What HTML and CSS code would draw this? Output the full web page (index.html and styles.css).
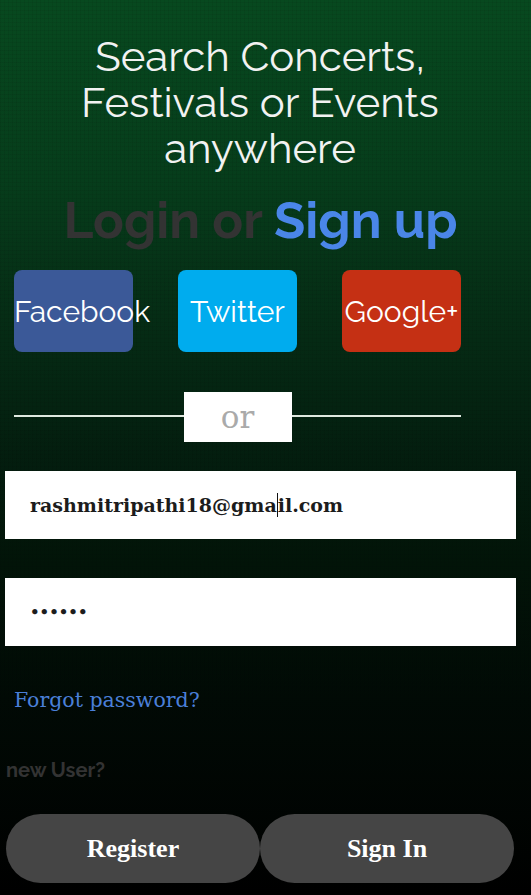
FILE: index.html
```html
<!DOCTYPE html>
<html lang="en">
<head>
<meta charset="utf-8">
<title>Login</title>
<link rel="stylesheet" href="styles.css">
</head>
<body>
<main class="page">
  <h1 class="headline">Search Concerts,<br>Festivals or Events<br>anywhere</h1>
  <h2 class="title"><span class="title-login">Login or</span> <span class="title-signup">Sign up</span></h2>
  <div class="socials">
    <a class="social social-fb">Facebook</a>
    <a class="social social-tw">Twitter</a>
    <a class="social social-gp">Google+</a>
  </div>
  <div class="divider">
    <span class="divider-line"></span>
    <span class="divider-box">or</span>
    <span class="divider-line"></span>
  </div>
  <div class="field">rashmitripathi18@gma<span class="caret"></span>il.com</div>
  <div class="field field-pass">••••••</div>
  <a class="forgot">Forgot password?</a>
  <p class="newuser">new User?</p>
  <div class="actions">
    <button class="pill">Register</button>
    <button class="pill">Sign In</button>
  </div>
</main>
</body>
</html>
```
FILE: styles.css
```css
html, body {
  margin: 0;
  padding: 0;
  height: 100%;
}
body {
  width: 531px;
  min-height: 895px;
  background:
    repeating-linear-gradient(90deg, rgba(0,0,0,0.06) 0 1px, transparent 1px 4px),
    repeating-linear-gradient(0deg, rgba(0,0,0,0.06) 0 1px, transparent 1px 4px),
    linear-gradient(180deg, #07491f 0%, #063d1b 20%, #052a14 38%, #031c0e 53%, #021408 63%, #010a05 78%, #000 100%);
  font-family: "Georgia", "DejaVu Serif", serif;
  overflow: hidden;
}
.page {
  display: flex;
  flex-direction: column;
  align-items: flex-start;
  height: 895px;
}
.headline {
  align-self: stretch;
  margin: 34px 11px 0 0;
  font-family: "Raleway", "Lato", sans-serif;
  font-weight: 400;
  font-size: 42px;
  line-height: 46px;
  text-align: center;
  color: #f2f2f2;
}
.title {
  align-self: stretch;
  margin: 20px 10px 0 0;
  font-family: "Raleway", "Lato", sans-serif;
  font-weight: 700;
  font-size: 51px;
  line-height: 56px;
  text-align: center;
}
.title-login { color: #333333; }
.title-signup { color: #4a86e8; }
.socials {
  display: flex;
  gap: 45px;
  margin: 22px 0 0 14px;
}
.social {
  width: 119px;
  height: 82px;
  border-radius: 8px;
  display: flex;
  align-items: center;
  justify-content: center;
  white-space: nowrap;
  font-family: "Raleway", "Lato", sans-serif;
  font-size: 30px;
  color: #ffffff;
}
.social-fb { background: #3b5998; justify-content: flex-start; }
.social-tw { background: #00acee; }
.social-gp { background: #c53014; }
.divider {
  display: flex;
  align-items: center;
  width: 447px;
  margin: 40px 0 0 14px;
}
.divider-line {
  flex: 1;
  height: 2px;
  margin-top: -3px;
  background: #dfe8df;
}
.divider-box {
  width: 108px;
  height: 50px;
  background: #ffffff;
  color: #aaaaaa;
  font-size: 31px;
  display: flex;
  align-items: center;
  justify-content: center;
}
.field {
  box-sizing: border-box;
  width: 511px;
  height: 68px;
  margin: 29px 0 0 5px;
  padding-left: 25px;
  background: #ffffff;
  display: flex;
  align-items: center;
  font-weight: 700;
  font-size: 19px;
  color: #1c1c1c;
}
.field-pass {
  margin-top: 39px;
  font-size: 15px;
}
.caret {
  display: inline-block;
  width: 1px;
  height: 24px;
  background: #111;
}
.forgot {
  margin: 42px 0 0 14px;
  font-size: 20.5px;
  color: #4a7fd8;
}
.newuser {
  margin: 46px 0 0 6px;
  font-family: "Raleway", "Lato", sans-serif;
  font-weight: 700;
  font-size: 20px;
  color: #333333;
}
.actions {
  display: flex;
  margin: 32px 0 0 6px;
}
.pill {
  width: 254px;
  height: 69px;
  border: 0;
  border-radius: 35px;
  background: #454545;
  color: #ffffff;
  font-family: "Liberation Serif", serif;
  font-weight: 700;
  font-size: 26px;
}
```
